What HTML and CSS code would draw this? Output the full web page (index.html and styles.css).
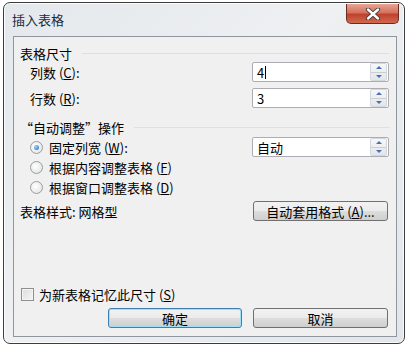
FILE: index.html
```html
<!DOCTYPE html>
<html lang="zh-CN">
<head>
  <meta charset="UTF-8">
  <title>插入表格</title>
  <link rel="stylesheet" href="styles.css">
</head>
<body>
  <!-- Dialog window -->
  <div class="window">
    <div class="titlebar">
      <span class="title">插入表格</span>
      <button class="close-btn">
        <svg width="16" height="12" viewBox="0 0 16 12">
          <path d="M3 1.5 L13 10.5 M13 1.5 L3 10.5" stroke="#3a3a3a" stroke-width="4.2" stroke-linecap="round"/>
          <path d="M3 1.5 L13 10.5 M13 1.5 L3 10.5" stroke="#ffffff" stroke-width="2.4" stroke-linecap="round"/>
        </svg>
      </button>
    </div>

    <div class="client">
      <!-- Table size -->
      <div class="heading first"><span>表格尺寸</span><div class="rule"></div></div>

      <div class="row">
        <label class="label indent">列数 (<u>C</u>):</label>
        <div class="spin">
          <span class="value">4<span class="caret"></span></span>
          <div class="spin-btns"><span class="up"></span><span class="down"></span></div>
        </div>
      </div>

      <div class="row gap">
        <label class="label indent">行数 (<u>R</u>):</label>
        <div class="spin">
          <span class="value">3</span>
          <div class="spin-btns"><span class="up"></span><span class="down"></span></div>
        </div>
      </div>

      <!-- Auto fit -->
      <div class="heading"><span>“自动调整”操作</span><div class="rule"></div></div>

      <div class="row">
        <label class="label radio-label"><span class="radio checked"></span>固定列宽 (<u>W</u>):</label>
        <div class="spin">
          <span class="value">自动</span>
          <div class="spin-btns"><span class="up"></span><span class="down"></span></div>
        </div>
      </div>
      <div class="row">
        <label class="label radio-label"><span class="radio"></span>根据内容调整表格 (<u>F</u>)</label>
      </div>
      <div class="row">
        <label class="label radio-label"><span class="radio"></span>根据窗口调整表格 (<u>D</u>)</label>
      </div>

      <div class="row style-row">
        <span class="label">表格样式:&nbsp;网格型</span>
        <button class="btn wide">自动套用格式 (<u>A</u>)...</button>
      </div>

      <div class="spacer"></div>

      <div class="row check-row">
        <label class="label"><span class="checkbox"></span>为新表格记忆此尺寸 (<u>S</u>)</label>
      </div>

      <div class="buttons">
        <button class="btn default">确定</button>
        <button class="btn wide">取消</button>
      </div>
    </div>
  </div>
</body>
</html>
```

FILE: styles.css
```css
/* Global */
body {
  margin: 0;
  background: #ffffff;
  font-family: "Noto Sans CJK SC", "Noto Sans", sans-serif;
  font-size: 13px;
  color: #000;
}

/* Window frame */
.window {
  margin: 2px 0 0 3px;
  width: 402px;
  height: 342px;
  box-sizing: border-box;
  border: 1px solid #3d3d3d;
  border-radius: 7px;
  background: linear-gradient(135deg, #e4e8ec 0%, #eef0f2 45%, #e2e6ea 100%);
  box-shadow: inset 0 0 0 1px rgba(255, 255, 255, 0.8);
  display: flex;
  flex-direction: column;
}

.titlebar {
  height: 33px;
  display: flex;
  align-items: center;
  padding: 0 5px 0 8px;
}

.title {
  font-size: 13px;
  color: #1b2b3b;
  margin-top: -1px;
}

.close-btn {
  margin-left: auto;
  align-self: flex-start;
  margin-top: 1px;
  width: 53px;
  height: 20px;
  border: 1px solid #6b2b24;
  border-top: none;
  border-radius: 0 0 5px 5px;
  background: linear-gradient(#e8a493 0%, #d4725e 45%, #c0412c 55%, #d06a4f 100%);
  display: flex;
  align-items: center;
  justify-content: center;
  padding: 0;
}

/* Client area */
.client {
  flex: 1;
  margin: 0 7px 6px 9px;
  border: 1px solid #8f969d;
  background: #f0f0f0;
  padding: 7px 7px 8px 6px;
  display: flex;
  flex-direction: column;
}

.heading {
  height: 19px;
  display: flex;
  align-items: center;
  margin-top: 10px;
}

.heading.first {
  margin-top: 0;
  height: 18px;
}

.heading .rule {
  flex: 1;
  height: 1px;
  background: #d9e1e7;
  margin: 0 0 0 10px;
}

.row {
  height: 20px;
  display: flex;
  align-items: center;
  justify-content: space-between;
}

.row.gap {
  margin-top: 6px;
}

.label {
  display: flex;
  align-items: center;
  white-space: pre;
}

.label u {
  text-underline-offset: 1px;
}

.indent {
  padding-left: 10px;
}

.radio-label {
  padding-left: 10px;
}

/* Spin boxes */
.spin {
  width: 137px;
  height: 20px;
  box-sizing: border-box;
  border: 1px solid #abadb3;
  border-radius: 2px;
  background: #fff;
  display: flex;
  align-items: center;
}

.spin .value {
  flex: 1;
  padding-left: 4px;
  display: flex;
  align-items: center;
  font-family: "Liberation Sans", "Noto Sans CJK SC", sans-serif;
}

.spin .value:lang(zh) {
  font-family: "Noto Sans CJK SC", sans-serif;
}

.caret {
  display: inline-block;
  width: 1px;
  height: 13px;
  background: #000;
  margin-left: 1px;
}

.spin-btns {
  width: 15px;
  height: 16px;
  margin-right: 1px;
  display: flex;
  flex-direction: column;
  border: 1px solid #d4d8dc;
  border-radius: 2px;
  background: linear-gradient(#f6f7f8, #e3e6e9);
}

.spin-btns span {
  flex: 1;
  display: flex;
  align-items: center;
  justify-content: center;
}

.spin-btns .up {
  border-bottom: 1px solid #c9ced3;
}

.spin-btns .up::before {
  content: "";
  border-left: 3px solid transparent;
  border-right: 3px solid transparent;
  border-bottom: 3px solid #4a6fb5;
}

.spin-btns .down::before {
  content: "";
  border-left: 3px solid transparent;
  border-right: 3px solid transparent;
  border-top: 3px solid #4a6fb5;
}

/* Radios and checkbox */
.radio {
  width: 11px;
  height: 11px;
  border: 1px solid #9a9d9f;
  border-radius: 50%;
  background: radial-gradient(circle at 40% 40%, #ffffff, #dcdedf);
  margin-right: 6px;
  display: inline-flex;
  align-items: center;
  justify-content: center;
  box-sizing: border-box;
  width: 13px;
  height: 13px;
}

.radio.checked::after {
  content: "";
  width: 5px;
  height: 5px;
  border-radius: 50%;
  background: radial-gradient(circle at 35% 35%, #a7d4f7, #1a66b8);
}

.checkbox {
  width: 13px;
  height: 13px;
  box-sizing: border-box;
  border: 1px solid #8e8f8f;
  background: linear-gradient(135deg, #dcdcdc, #f6f6f6);
  box-shadow: inset 0 0 0 1px #f4f4f4;
  margin-right: 5px;
}

.style-row {
  margin-top: 4px;
}

.spacer {
  flex: 1;
}

.check-row {
  padding-left: 1px;
}

/* Buttons */
.btn {
  height: 20px;
  box-sizing: border-box;
  border: 1px solid #707070;
  border-radius: 3px;
  background: linear-gradient(#f2f2f2 0%, #ebebeb 50%, #dddddd 51%, #cfcfcf 100%);
  font-family: "Noto Sans CJK SC", sans-serif;
  font-size: 13px;
  color: #000;
  padding: 0;
  display: flex;
  align-items: center;
  justify-content: center;
  white-space: pre;
}

.btn.wide {
  width: 135px;
  margin-right: 1px;
}

.buttons {
  display: flex;
  justify-content: flex-end;
  gap: 11px;
  margin-top: 4px;
}

.btn.default {
  width: 134px;
  border-color: #3c7fb1;
  box-shadow: inset 0 0 0 1px #9fe0f8;
  background: linear-gradient(#eaf6fd 0%, #d9f0fc 50%, #bee6fd 51%, #a7d9f5 100%);
  background: linear-gradient(#f2f2f2 0%, #ebebeb 50%, #dddddd 51%, #cfcfcf 100%);
}
```
